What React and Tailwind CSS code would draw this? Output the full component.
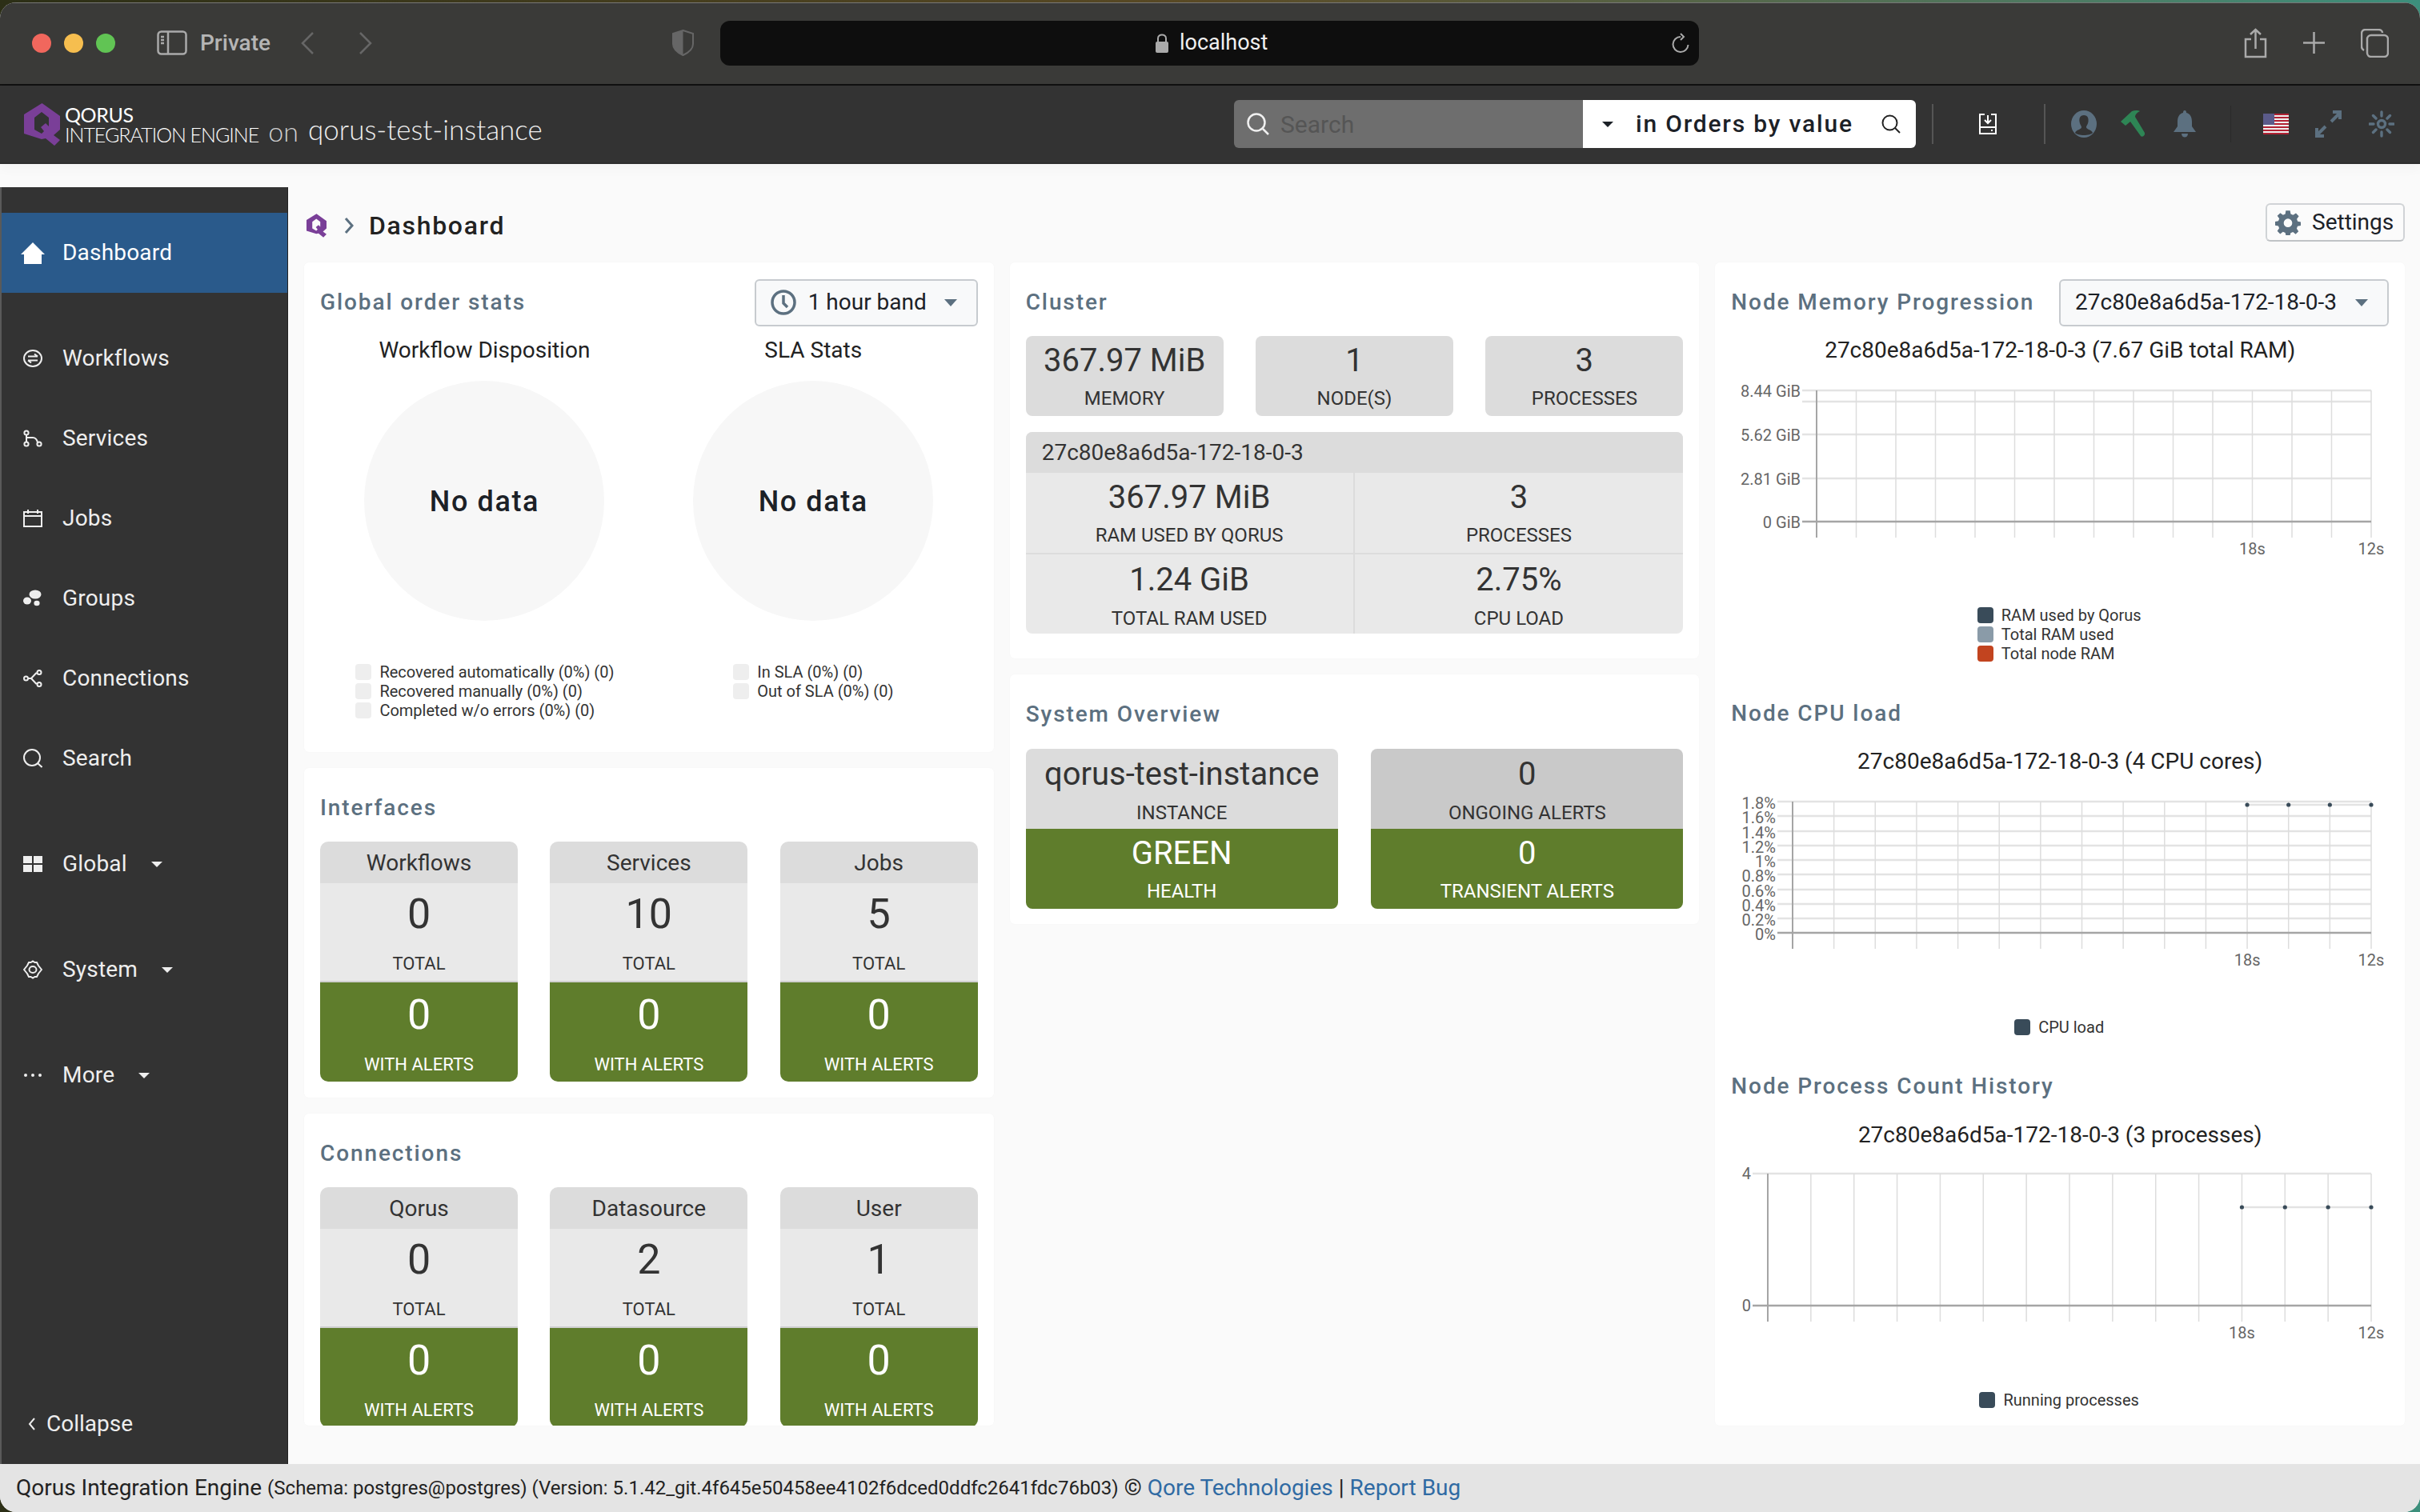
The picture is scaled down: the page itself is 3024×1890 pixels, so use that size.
import React from "react";

const Logo = ({ w, h }) => (
  <svg width={w} height={h} viewBox="0 0 45 53" className="shrink-0">
    <path fillRule="evenodd" fill="#7a3f98" d="M22.5 0 L45 16 V33 L37 40 L45 46 L38 53 L27 44 L22 45 L0 38 V14 Z M22 11 L13 18 V33 L22 38 L25 35 L21 30 L27 25 L31 29 V18 Z" />
  </svg>
);

const Caret = ({ cls = "border-t-[#fff]" }) => (
  <span className={`inline-block w-0 h-0 border-l-[7px] border-r-[7px] border-t-[7px] border-l-transparent border-r-transparent ${cls}`} />
);

const NavIcon = ({ name }) => {
  const p = { width: 24, height: 26, viewBox: "0 0 24 26", fill: "none", stroke: "#eee", strokeWidth: 2, className: "shrink-0" };
  switch (name) {
    case "workflows":
      return (
        <svg {...p}>
          <ellipse cx="12" cy="13" rx="11" ry="10" />
          <path d="M6 10.5 H18 M18 15.5 H6 M14 7.5 L18 10.5 M10 18.5 L6 15.5" />
        </svg>
      );
    case "services":
      return (
        <svg {...p}>
          <circle cx="4" cy="6" r="2.6" />
          <circle cx="4" cy="20" r="2.6" />
          <circle cx="20" cy="20" r="2.6" />
          <path d="M4 9 V17 M4 12 H12 C15 12 17 14 18 18" />
        </svg>
      );
    case "jobs":
      return (
        <svg {...p}>
          <rect x="1" y="5" width="22" height="18" />
          <path d="M1 10 H23 M6 2 V7 M18 2 V7" />
        </svg>
      );
    case "groups":
      return (
        <svg {...p} stroke="none" fill="#eee">
          <ellipse cx="15" cy="8" rx="7.5" ry="5.5" />
          <ellipse cx="5" cy="16" rx="5" ry="4.5" />
          <ellipse cx="17" cy="19" rx="3.6" ry="3.2" />
        </svg>
      );
    case "connections":
      return (
        <svg {...p}>
          <circle cx="3.5" cy="13" r="2.5" />
          <circle cx="20" cy="5.5" r="2.5" />
          <circle cx="20" cy="20.5" r="2.5" />
          <path d="M6 13 H10 L16 6.5 H18 M10 13 L16 19.5 H18" />
        </svg>
      );
    case "search":
      return (
        <svg {...p}>
          <ellipse cx="11" cy="12" rx="10" ry="10" />
          <path d="M18 19 L23.5 24" />
        </svg>
      );
    case "global":
      return (
        <svg {...p} stroke="none" fill="#eee">
          <rect x="0" y="3" width="11" height="9" />
          <rect x="13" y="3" width="11" height="9" />
          <rect x="0" y="14" width="11" height="9" />
          <rect x="13" y="14" width="11" height="9" />
        </svg>
      );
    case "system":
      return (
        <svg {...p}>
          <path d="M7 4 H9.5 L12 2.5 L14.5 4 H17 L19 8 L23 13 L19 18 L17 22 H14.5 L12 23.5 L9.5 22 H7 L5 18 L1 13 L5 8 Z" />
          <ellipse cx="12" cy="13" rx="4.5" ry="4" />
        </svg>
      );
    default:
      return (
        <svg {...p} stroke="none" fill="#eee">
          <circle cx="3" cy="13" r="2" />
          <circle cx="12" cy="13" r="2" />
          <circle cx="21" cy="13" r="2" />
        </svg>
      );
  }
};

const NavItem = ({ icon, label, caret, active }) => (
  <div className={`h-[100px] flex items-center pl-[27px] text-[28px] ${active ? "bg-[#2a5a8b] text-white" : "text-[#eeeeee]"}`}>
    {active ? (
      <svg width="30" height="27" viewBox="0 0 30 27" className="shrink-0 -ml-[3px] mr-[22px]">
        <path fill="#fff" d="M15 0 L30 15 H26 V27 H4 V15 H0 Z" />
      </svg>
    ) : (
      <span className="w-[49px] shrink-0 flex">
        <NavIcon name={icon} />
      </span>
    )}
    <span className="tracking-[0.2px]">{label}</span>
    {caret && (
      <span className="ml-[30px] flex items-center">
        <Caret cls="border-t-[#eeeeee]" />
      </span>
    )}
  </div>
);

const Card = ({ className = "", children }) => (
  <div className={`bg-white rounded-[6px] px-[20px] pt-[20px] overflow-hidden shadow-[0_0_2px_rgba(0,0,0,0.03)] ${className}`}>{children}</div>
);

const Heading = ({ children, className = "" }) => (
  <h2 className={`text-[28px] font-medium text-[#5c7080] tracking-[1.9px] whitespace-nowrap ${className}`}>{children}</h2>
);

const Select = ({ className = "", children }) => (
  <div className={`h-[59px] flex items-center justify-between pl-[18px] pr-[24px] bg-[#f8f9fa] border-2 border-[#c7cbcf] rounded-[6px] text-[28px] text-[#1c2127] ${className}`}>
    {children}
    <span className="inline-block w-0 h-0 border-l-[8px] border-r-[8px] border-t-[9px] border-l-transparent border-r-transparent border-t-[#5c7080]" />
  </div>
);

const Dash = ({ label, value, alerts }) => (
  <div className="w-[247px] h-[300px] rounded-[10px] overflow-hidden shrink-0 text-center">
    <div className="h-[52px] pt-[2px] bg-[#dcdcdc] text-[28px] text-[#333] flex items-center justify-center">{label}</div>
    <div className="h-[124px] bg-[#e9e9e9] border-b-2 border-[#cfcfcf] text-[#333]">
      <div className="h-[74px] pt-[4px] flex items-center justify-center text-[52px] leading-none">{value}</div>
      <div className="mt-[14px] h-[24px] flex items-center justify-center text-[22px]">TOTAL</div>
    </div>
    <div className="h-[124px] bg-[#5f7d2c] text-white pt-[2px]">
      <div className="h-[74px] pt-[4px] flex items-center justify-center text-[52px] leading-none">{alerts}</div>
      <div className="mt-[14px] h-[24px] flex items-center justify-center text-[22px]">WITH ALERTS</div>
    </div>
  </div>
);

const Stat = ({ value, label, className = "", valueH = "h-[58px]" }) => (
  <div className={`text-center ${className}`}>
    <div className={`${valueH} pt-[3px] flex items-center justify-center text-[40px] leading-none`}>{value}</div>
    <div className="h-[40px] flex items-center justify-center text-[24px]">{label}</div>
  </div>
);

const Legend = ({ items, className = "" }) => (
  <div className={`text-[20px] text-[#333] ${className}`}>
    {items.map(([c, t]) => (
      <div key={t} className="h-[24px] flex items-center">
        <span className="w-[20px] h-[20px] rounded-[4px] mr-[10px] shrink-0" style={{ background: c }} />
        <span className="whitespace-nowrap">{t}</span>
      </div>
    ))}
  </div>
);

const Pie = ({ title, legend, legendCls }) => (
  <div className="w-1/2 flex flex-col items-center">
    <div className="h-[40px] mt-[10px] flex items-center text-[28px] text-[#222]">{title}</div>
    <div className="w-[300px] h-[300px] mt-[18px] pt-[2px] rounded-full bg-[#f7f7f7] flex items-center justify-center text-[36px] font-medium tracking-[1.6px] text-[#1c2127]">No data</div>
    <Legend className={`mt-[52px] h-[72px] ${legendCls}`} items={legend.map((t) => ["#eeeeee", t])} />
  </div>
);

const GRID = "#e3e3e3";
const AXIS = "#a5a5a5";
const TXT = { fontSize: 20, fill: "#666", fontFamily: "Roboto, sans-serif" };

const Chart = ({ y0, h, left, top, bottom, tickEnd, tickStart, ys, labels, xl, points, pointY }) => {
  const right = 2964;
  const step = (right - left) / 14;
  const xs = Array.from({ length: 15 }, (_, i) => left + step * i);
  return (
    <svg width="861" height={h} viewBox={`2144 ${y0} 861 ${h}`} className="block -ml-[20px]">
      {ys.map((y, i) => (
        <line key={i} x1={tickStart} x2={right} y1={y} y2={y} stroke={GRID} strokeWidth="2.5" />
      ))}
      {xs.map((x, i) => (
        <line key={i} x1={x} x2={x} y1={top} y2={tickEnd} stroke={i === 0 ? AXIS : "#dddddd"} strokeWidth={i === 0 ? 2 : 1.5} />
      ))}
      <line x1={tickStart} x2={right} y1={bottom} y2={bottom} stroke={AXIS} strokeWidth="2.5" />
      {labels.map(([t, y]) => (
        <text key={t} x={tickStart - 2} y={y + 7} textAnchor="end" {...TXT}>{t}</text>
      ))}
      <text x={xs[11]} y={xl} textAnchor="middle" {...TXT}>18s</text>
      <text x={right} y={xl} textAnchor="middle" {...TXT}>12s</text>
      {points && (
        <>
          <line x1={xs[11]} x2={right} y1={pointY} y2={pointY} stroke={GRID} strokeWidth="2.5" />
          {xs.slice(11).map((x) => (
            <circle key={x} cx={x} cy={pointY} r="2.6" fill="#394b59" />
          ))}
        </>
      )}
    </svg>
  );
};

export default function App() {
  return (
    <div className="w-[3024px] h-[1890px] overflow-hidden pt-[3px] bg-gradient-to-r from-[#2c2f16] via-[#5a4a25] to-[#3c8f7c] font-['Roboto',sans-serif]">
      <div className="h-[1887px] rounded-[20px] overflow-hidden flex flex-col bg-[#fafafa]">
        {/* browser toolbar */}
        <div className="h-[104px] shrink-0 bg-[#3a3a38] border-t border-[#777] border-b-2 border-b-[#111] flex items-center pl-[40px] pb-[2px] text-[#bdbdbd]">
          <span className="w-[24px] h-[24px] rounded-full bg-[#f1675d] shrink-0" />
          <span className="w-[24px] h-[24px] rounded-full bg-[#f6be4f] ml-[16px] shrink-0" />
          <span className="w-[24px] h-[24px] rounded-full bg-[#61c454] ml-[16px] shrink-0" />
          <svg width="38" height="31" viewBox="0 0 38 31" fill="none" stroke="#aaa" strokeWidth="2.5" className="ml-[52px] shrink-0">
            <rect x="1.5" y="1.5" width="35" height="28" rx="4" />
            <path d="M14 2 V29 M5 8 H9 M5 12 H9 M5 16 H9" />
          </svg>
          <span className="ml-[16px] w-[87px] text-[28px] font-medium text-[#b5b5b5] shrink-0">Private</span>
          <svg width="17" height="28" viewBox="0 0 17 28" fill="none" stroke="#666" strokeWidth="2.5" className="ml-[39px] shrink-0">
            <path d="M15 1 L2 14 L15 27" />
          </svg>
          <svg width="17" height="28" viewBox="0 0 17 28" fill="none" stroke="#666" strokeWidth="2.5" className="ml-[55px] shrink-0">
            <path d="M2 1 L15 14 L2 27" />
          </svg>
          <svg width="27" height="33" viewBox="0 0 27 33" className="ml-[375px] shrink-0">
            <path d="M13.5 1 L26 5 V18 C26 25 20 29 13.5 32 C7 29 1 25 1 18 V5 Z" fill="none" stroke="#666" strokeWidth="2" />
            <path d="M13.5 1 L1 5 V18 C1 25 7 29 13.5 32 Z" fill="#666" />
          </svg>
          <div className="ml-[33px] w-[1223px] h-[56px] rounded-[12px] bg-[#0e0e0e] flex items-center pr-[12px] shrink-0">
            <span className="ml-[543px] flex items-center text-[27px] text-[#f0f0f0]">
              <svg width="18" height="24" viewBox="0 0 18 24" className="mr-[13px]">
                <rect x="1" y="10" width="16" height="14" rx="2" fill="#aaa" />
                <path d="M4 10 V6 C4 0 14 0 14 6 V10" fill="none" stroke="#aaa" strokeWidth="2" />
              </svg>
              localhost
            </span>
            <svg width="22" height="26" viewBox="0 0 22 26" fill="none" stroke="#aaa" strokeWidth="2" className="ml-auto">
              <path d="M11 5 A9.5 9.5 0 1 0 20.5 15 M11 1 L15 5 L11 9" />
            </svg>
          </div>
          <svg width="31" height="38" viewBox="0 0 31 38" fill="none" stroke="#aaa" strokeWidth="2.5" className="ml-[680px] shrink-0">
            <path d="M15.5 26 V2 M9 8 L15.5 2 L22 8 M10 14 H3 V36 H28 V14 H21" />
          </svg>
          <svg width="27" height="27" viewBox="0 0 27 27" stroke="#aaa" strokeWidth="2.5" className="ml-[44px] shrink-0">
            <path d="M13.5 0 V27 M0 13.5 H27" />
          </svg>
          <svg width="35" height="36" viewBox="0 0 35 36" fill="none" stroke="#aaa" strokeWidth="2.5" className="ml-[45px] shrink-0">
            <rect x="8" y="8" width="26" height="27" rx="5" />
            <path d="M4 27 C2 26 1 25 1 22 V6 C1 3 3 1 6 1 H22 C25 1 27 3 27 5" />
          </svg>
        </div>

        {/* app header */}
        <div className="h-[98px] shrink-0 bg-[#333333] border-b-2 border-b-[#2d2d2d] flex items-center pl-[30px] shadow-[0_6px_14px_rgba(0,0,0,0.03)]">
          <Logo w={45} h={53} />
          <div className="ml-[6px] w-[304px] shrink-0 flex items-end font-['Lato',sans-serif] text-white leading-none mt-[2px]">
            <div className="shrink-0">
              <div className="text-[25px] tracking-[-0.4px] h-[25px] flex items-center">QORUS</div>
              <div className="text-[25px] font-light tracking-[-1px] h-[25px] flex items-center whitespace-nowrap">INTEGRATION ENGINE</div>
            </div>
            <span className="ml-[12px] text-[34px] font-light text-[#cfcfcf]">on</span>
          </div>
          <span className="w-[292px] shrink-0 text-[35px] font-light text-[#eeeeee] font-['Lato',sans-serif] whitespace-nowrap mt-[12px]">qorus-test-instance</span>
          <div className="ml-auto w-[1482px] shrink-0 flex items-center">
            <div className="w-[852px] h-[60px] flex rounded-[6px] overflow-hidden shrink-0">
              <div className="w-[436px] bg-[#6e6e6e] flex items-center pl-[16px]">
                <svg width="28" height="28" viewBox="0 0 28 28" fill="none" stroke="#f0f0f0" strokeWidth="2.5">
                  <circle cx="12" cy="12" r="10.5" />
                  <path d="M20 20 L27 27" />
                </svg>
                <span className="ml-[14px] text-[30px] text-[#555555]">Search</span>
              </div>
              <div className="flex-1 bg-white flex items-center pl-[24px] pr-[19px] text-[#1c2127]">
                <Caret cls="border-t-[#1c2127]" />
                <span className="ml-[28px] pb-[2px] text-[30px] font-medium tracking-[1.8px] whitespace-nowrap">in Orders by value</span>
                <svg width="24" height="24" viewBox="0 0 24 24" fill="none" stroke="#222" strokeWidth="2" className="ml-auto">
                  <circle cx="10.5" cy="10.5" r="9" />
                  <path d="M17 17 L23 23" />
                </svg>
              </div>
            </div>
            <span className="ml-[20px] w-[2px] h-[50px] bg-[#555] shrink-0" />
            <svg width="22" height="26" viewBox="0 0 22 26" fill="none" stroke="#fff" strokeWidth="2" className="ml-[57px] shrink-0">
              <path d="M7 1 H1 V25 H21 V1 H15 M1 17 H21 M11 2 V11 M7 8 L11 12 L15 8 M15 21 H17" />
            </svg>
            <span className="ml-[59px] w-[2px] h-[50px] bg-[#555] shrink-0" />
            <svg width="32" height="34" viewBox="0 0 32 34" className="ml-[32px] shrink-0">
              <ellipse cx="16" cy="17" rx="16" ry="17" fill="#5c7080" />
              <path d="M16 6 C11 6 10 10 10.5 14 C11 18 13 19 13 21 C13 24 6 24 5 28 C8 32 24 32 27 28 C26 24 19 24 19 21 C19 19 21 18 21.5 14 C22 10 21 6 16 6 Z" fill="#333" />
            </svg>
            <svg width="32" height="34" viewBox="0 0 32 34" className="ml-[28px] shrink-0">
              <path d="M2 14 L16 1 C20 -0.5 24 0 26 1 C22 3 20 5 20 8 L32 28 C33 31 29 34 27 32 L14 14 L8 19 Z" fill="#2e8555" />
            </svg>
            <svg width="28" height="34" viewBox="0 0 28 34" fill="#5c7080" className="ml-[36px] shrink-0">
              <path d="M14 0 C16 0 16 2 16 3 C21 4 23 9 23 14 V20 L28 27 H0 L5 20 V14 C5 9 7 4 12 3 C12 2 12 0 14 0 Z" />
              <path d="M10 29 H18 C18 35 10 35 10 29 Z" />
            </svg>
            <span className="ml-[43px] w-[1px] h-[46px] bg-[#2a2a2a] shrink-0" />
            <svg width="32" height="26" viewBox="0 0 32 26" className="ml-[40px] shrink-0">
              <rect width="32" height="26" fill="#eee" />
              <rect y="0" width="32" height="2" fill="#b22234" />
              <rect y="4" width="32" height="2" fill="#b22234" />
              <rect y="8" width="32" height="2" fill="#b22234" />
              <rect y="12" width="32" height="2" fill="#b22234" />
              <rect y="16" width="32" height="2" fill="#b22234" />
              <rect y="20" width="32" height="2" fill="#b22234" />
              <rect y="24" width="32" height="2" fill="#b22234" />
              <rect width="14" height="14" fill="#5b5b8a" />
            </svg>
            <svg width="33" height="34" viewBox="0 0 33 34" fill="none" stroke="#5c7080" strokeWidth="4" className="ml-[33px] shrink-0">
              <path d="M20 14 L31 3 M22 2 H31 V11 M13 20 L2 31 M2 22 V32 H11" />
            </svg>
            <svg width="32" height="34" viewBox="0 0 32 34" fill="none" stroke="#5c7080" strokeWidth="3.4" strokeLinecap="round" className="ml-[34px] shrink-0">
              <circle cx="16" cy="17" r="4.5" />
              <path d="M16 2 V7 M16 27 V32 M1 17 H6 M26 17 H31 M5.5 6.5 L9 10 M23 24 L26.5 27.5 M26.5 6.5 L23 10 M9 24 L5.5 27.5" />
            </svg>
          </div>
        </div>

        {/* body */}
        <div className="flex-1 flex min-h-0">
          <aside className="w-[360px] shrink-0 mt-[29px] bg-[#333333] border-l-2 border-[#5a5a5a] border-r border-r-[#222] flex flex-col pt-[32px]">
            <NavItem active label="Dashboard" />
            <div className="mt-[32px]">
              <NavItem icon="workflows" label="Workflows" />
              <NavItem icon="services" label="Services" />
              <NavItem icon="jobs" label="Jobs" />
              <NavItem icon="groups" label="Groups" />
              <NavItem icon="connections" label="Connections" />
              <NavItem icon="search" label="Search" />
            </div>
            <div className="mt-[32px]"><NavItem icon="global" label="Global" caret /></div>
            <div className="mt-[32px]"><NavItem icon="system" label="System" caret /></div>
            <div className="mt-[32px]"><NavItem icon="more" label="More" caret /></div>
            <div className="mt-auto h-[100px] flex items-center pl-[33px] text-[28px] text-[#eeeeee]">
              <svg width="10" height="16" viewBox="0 0 10 16" fill="none" stroke="#eee" strokeWidth="2" className="mr-[13px]">
                <path d="M8 1 L2 8 L8 15" />
              </svg>
              Collapse
            </div>
          </aside>

          <main className="flex-1 min-w-0 pl-[20px] pr-[19px]">
            <div className="h-[123px] pt-[29px] flex items-start">
              <div className="flex items-center h-[97px] pl-[3px] pb-[2px]">
                <Logo w={25} h={30} />
                <svg width="12" height="22" viewBox="0 0 12 22" fill="none" stroke="#5c7080" strokeWidth="3" className="ml-[22px]">
                  <path d="M2 2 L10 11 L2 20" />
                </svg>
                <span className="ml-[19px] text-[32px] font-medium tracking-[1.7px] text-[#222]">Dashboard</span>
              </div>
              <div className="ml-auto mt-[20px] w-[174px] h-[48px] border-2 border-[#d0d3d6] border-b-[#c0c3c6] rounded-[6px] bg-[#fbfbfb] flex items-center pl-[10px] text-[28px] text-[#1c2127]">
                <svg width="32" height="32" viewBox="0 0 24 24" fill="#5c7080" className="shrink-0 mr-[14px]">
                  <path fillRule="evenodd" d="M10 1 H14 L14.6 4.2 L16.8 5.1 L19.5 3.3 L22.2 6.2 L20.3 8.8 L21.1 11 L24 11.6 V15 L21 15.6 L20.2 17.8 L21.9 20.4 L19.2 23 L16.7 21 L14.5 21.9 L14 24 H10 L9.5 21.8 L7.3 20.9 L4.7 22.8 L2 20 L3.8 17.5 L3 15.3 L0 14.8 V11.2 L3 10.6 L3.9 8.5 L2 5.9 L4.8 3.2 L7.4 5 L9.5 4.2 Z M12 8.5 A4 4 0 1 0 12 16.5 A4 4 0 1 0 12 8.5 Z" />
                </svg>
                Settings
              </div>
            </div>

            <div className="flex gap-[20px] h-[1454px]">
              {/* column 1 */}
              <div className="flex-1 min-w-0 flex flex-col gap-[20px]">
                <Card className="h-[612px] shrink-0">
                  <div className="h-[60px] flex items-center justify-between">
                    <Heading>Global order stats</Heading>
                    <Select className="w-[279px]">
                      <span className="flex items-center whitespace-nowrap">
                        <svg width="32" height="32" viewBox="0 0 32 32" fill="none" stroke="#5c7080" strokeWidth="3.5" className="mr-[15px]">
                          <circle cx="16" cy="16" r="14" />
                          <path d="M16 7 V17 L21 22" />
                        </svg>
                        1 hour band
                      </span>
                    </Select>
                  </div>
                  <div className="flex">
                    <Pie title="Workflow Disposition" legend={["Recovered automatically (0%) (0)", "Recovered manually (0%) (0)", "Completed w/o errors (0%) (0)"]} legendCls="w-[322px]" />
                    <Pie title="SLA Stats" legend={["In SLA (0%) (0)", "Out of SLA (0%) (0)"]} legendCls="w-[200px]" />
                  </div>
                </Card>
                <Card className="h-[412px] shrink-0">
                  <div className="h-[60px] flex items-center"><Heading>Interfaces</Heading></div>
                  <div className="mt-[12px] flex justify-between">
                    <Dash label="Workflows" value="0" alerts="0" />
                    <Dash label="Services" value="10" alerts="0" />
                    <Dash label="Jobs" value="5" alerts="0" />
                  </div>
                </Card>
                <Card className="h-[390px] shrink-0">
                  <div className="h-[60px] flex items-center"><Heading>Connections</Heading></div>
                  <div className="mt-[12px] flex justify-between">
                    <Dash label="Qorus" value="0" alerts="0" />
                    <Dash label="Datasource" value="2" alerts="0" />
                    <Dash label="User" value="1" alerts="0" />
                  </div>
                </Card>
              </div>

              {/* column 2 */}
              <div className="flex-1 min-w-0 flex flex-col gap-[20px]">
                <Card className="h-[495px] shrink-0 text-[#333]">
                  <div className="h-[60px] flex items-center"><Heading>Cluster</Heading></div>
                  <div className="mt-[12px] flex justify-between">
                    <Stat value="367.97 MiB" label="MEMORY" className="w-[247px] h-[100px] bg-[#dcdcdc] rounded-[8px]" />
                    <Stat value="1" label="NODE(S)" className="w-[247px] h-[100px] bg-[#dcdcdc] rounded-[8px]" />
                    <Stat value="3" label="PROCESSES" className="w-[247px] h-[100px] bg-[#dcdcdc] rounded-[8px]" />
                  </div>
                  <div className="mt-[20px] rounded-[8px] overflow-hidden bg-[#e9e9e9]">
                    <div className="h-[51px] bg-[#dcdcdc] flex items-center pl-[20px] text-[28px]">27c80e8a6d5a-172-18-0-3</div>
                    <div className="grid grid-cols-2 border-b-2 border-[#dcdcdc] h-[102px]">
                      <Stat value="367.97 MiB" label="RAM USED BY QORUS" className="border-r-2 border-[#dcdcdc]" />
                      <Stat value="3" label="PROCESSES" />
                    </div>
                    <div className="grid grid-cols-2 h-[99px]">
                      <Stat value="1.24 GiB" label="TOTAL RAM USED" className="border-r-2 border-[#dcdcdc]" valueH="h-[60px]" />
                      <Stat value="2.75%" label="CPU LOAD" valueH="h-[60px]" />
                    </div>
                  </div>
                </Card>
                <Card className="h-[312px] shrink-0">
                  <div className="h-[60px] flex items-center"><Heading>System Overview</Heading></div>
                  <div className="mt-[13px] flex justify-between">
                    <div className="w-[390px] rounded-[8px] overflow-hidden">
                      <Stat value="qorus-test-instance" label="INSTANCE" className="h-[100px] bg-[#dcdcdc] text-[#333]" valueH="h-[60px]" />
                      <Stat value="GREEN" label="HEALTH" className="h-[100px] bg-[#5f7d2c] text-white" />
                    </div>
                    <div className="w-[390px] rounded-[8px] overflow-hidden">
                      <Stat value="0" label="ONGOING ALERTS" className="h-[100px] bg-[#c9c9c9] text-[#333]" valueH="h-[60px]" />
                      <Stat value="0" label="TRANSIENT ALERTS" className="h-[100px] bg-[#5f7d2c] text-white" />
                    </div>
                  </div>
                </Card>
              </div>

              {/* column 3 */}
              <div className="flex-1 min-w-0">
                <Card className="w-full h-[1454px]">
                  <div className="h-[60px] flex items-center justify-between">
                    <Heading>Node Memory Progression</Heading>
                    <Select className="w-[412px]">
                      <span className="whitespace-nowrap">27c80e8a6d5a-172-18-0-3</span>
                    </Select>
                  </div>
                  <div className="h-[40px] mt-[10px] flex items-center justify-center text-[28px] text-[#222] whitespace-nowrap">27c80e8a6d5a-172-18-0-3 (7.67 GiB total RAM)</div>
                  <Chart
                    y0={458} h={270} left={2271} top={488} bottom={652} tickEnd={672} tickStart={2253}
                    ys={[488, 502, 543, 598]}
                    labels={[["8.44 GiB", 489], ["5.62 GiB", 544], ["2.81 GiB", 599], ["0 GiB", 653]]}
                    xl={693}
                  />
                  <div className="mt-[29px] flex justify-center -ml-[2px]">
                    <Legend items={[["#394b59", "RAM used by Qorus"], ["#8a9ba8", "Total RAM used"], ["#c2441f", "Total node RAM"]]} />
                  </div>

                  <div className="h-[40px] mt-[43px] flex items-center"><Heading>Node CPU load</Heading></div>
                  <div className="h-[40px] mt-[20px] flex items-center justify-center text-[28px] text-[#222] whitespace-nowrap">27c80e8a6d5a-172-18-0-3 (4 CPU cores)</div>
                  <Chart
                    y0={972} h={268} left={2241} top={1002} bottom={1166} tickEnd={1186} tickStart={2222}
                    ys={[1002, 1020, 1039, 1057, 1075, 1093, 1112, 1130, 1148]}
                    labels={[["1.8%", 1004], ["1.6%", 1022], ["1.4%", 1041], ["1.2%", 1059], ["1%", 1077], ["0.8%", 1095], ["0.6%", 1114], ["0.4%", 1132], ["0.2%", 1150], ["0%", 1168]]}
                    xl={1207}
                    points pointY={1006}
                  />
                  <div className="mt-[32px] flex justify-center -ml-[2px]">
                    <Legend items={[["#394b59", "CPU load"]]} />
                  </div>

                  <div className="h-[40px] mt-[42px] flex items-center"><Heading>Node Process Count History</Heading></div>
                  <div className="h-[40px] mt-[21px] flex items-center justify-center text-[28px] text-[#222] whitespace-nowrap">27c80e8a6d5a-172-18-0-3 (3 processes)</div>
                  <Chart
                    y0={1439} h={261} left={2210} top={1467} bottom={1632} tickEnd={1652} tickStart={2191}
                    ys={[1467]}
                    labels={[["4", 1467], ["0", 1632]]}
                    xl={1673}
                    points pointY={1509}
                  />
                  <div className="mt-[38px] flex justify-center -ml-[2px]">
                    <Legend items={[["#394b59", "Running processes"]]} />
                  </div>
                </Card>
              </div>
            </div>
          </main>
        </div>

        {/* footer */}
        <footer className="h-[60px] shrink-0 bg-[#e4e4e4] flex items-center pl-[20px] text-[#222] whitespace-nowrap">
          <span className="text-[28px]">Qorus Integration Engine</span>
          <span className="ml-[7px] text-[24px]">(Schema: postgres@postgres) (Version: 5.1.42_git.4f645e50458ee4102f6dced0ddfc2641fdc76b03)</span>
          <span className="ml-[7px] text-[28px]">©</span>
          <span className="ml-[7px] text-[28px] text-[#2f6aa3]">Qore Technologies</span>
          <span className="ml-[7px] text-[28px]">|</span>
          <span className="ml-[7px] text-[28px] text-[#2f6aa3]">Report Bug</span>
        </footer>
      </div>
    </div>
  );
}
